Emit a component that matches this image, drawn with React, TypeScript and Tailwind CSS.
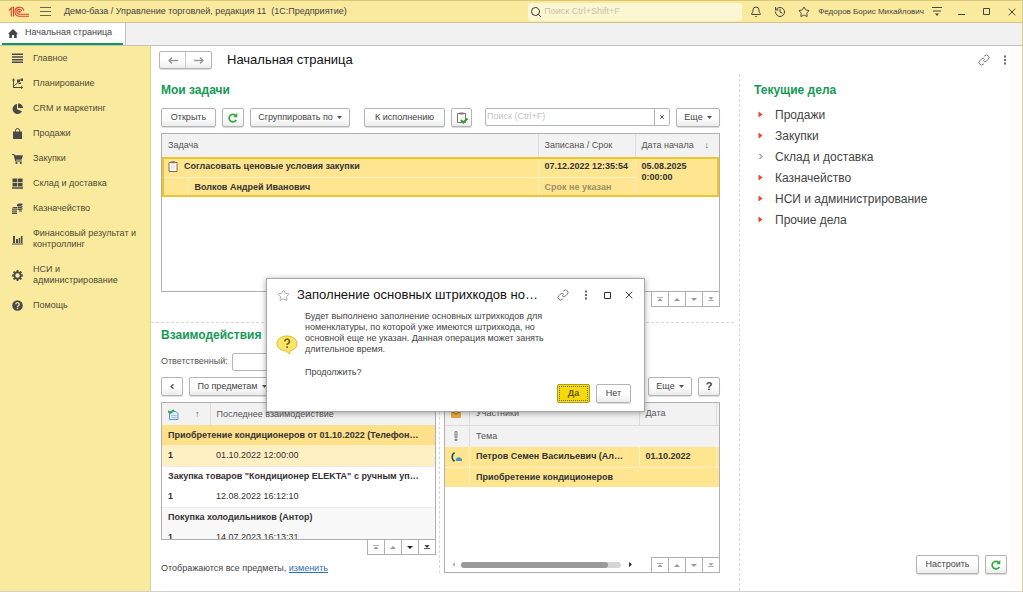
import React from "react";
import { Bell, History, Search, Star, X } from "lucide-react";

const btn =
  "flex h-[19px] shrink-0 items-center justify-center whitespace-nowrap rounded-[2px] border border-[#b4b4b4] bg-linear-to-b from-white from-50% to-[#ececec] text-[9px] leading-none text-[#444] shadow-[0_1px_1px_rgba(0,0,0,0.15)]";
const heading = "text-[12px] leading-4 font-bold text-[#149a55]";

function Refresh() {
  return (
    <svg viewBox="0 0 12 12" className="size-3" fill="none" stroke="#35a843" strokeWidth="1.7">
      <path d="M9.300 7.800A3.800 3.800 0 1 1 8.600 3.400" />
      <path d="M10.300 1v4.200H6.200z" fill="#35a843" stroke="none" />
    </svg>
  );
}

function Caret() {
  return (
    <svg viewBox="0 0 5 3" className="ml-1 h-[3px] w-[5px]" fill="#555">
      <path d="M0 0h5L2.500 3z" />
    </svg>
  );
}

function Dots() {
  return (
    <svg viewBox="0 0 4 12" className="h-3 w-1" fill="#666">
      <rect x="1" y="1.500" width="2" height="2" />
      <rect x="1" y="5" width="2" height="2" />
      <rect x="1" y="8.500" width="2" height="2" />
    </svg>
  );
}

function ChainLink() {
  return (
    <svg viewBox="0 0 24 24" className="size-3" fill="none" stroke="#777" strokeWidth="2">
      <path d="M10 13a5 5 0 0 0 7.540.54l3-3a5 5 0 0 0-7.070-7.070l-1.720 1.710" />
      <path d="M14 11a5 5 0 0 0-7.540-.54l-3 3a5 5 0 0 0 7.070 7.070l1.710-1.710" />
    </svg>
  );
}

function Logo() {
  return (
    <svg viewBox="0 0 22 12" className="h-3 w-[22px]" fill="none" stroke="#dc4030" strokeWidth="1.100">
      <path d="M.8 4.300 3.300 2v8.500M5.500 10.500V1.300H4.200" />
      <path d="M15.800 4.600A4.500 4.500 0 1 0 11.500 10.300h9.500" />
      <path d="M13.700 5A2.500 2.500 0 1 0 11.500 8.300h9.500" />
      <circle cx="11.500" cy="5.800" r=".7" />
    </svg>
  );
}

const navIcons: Record<string, React.ReactNode> = {
  main: <path d="M0 .5h11v1.500H0zM0 3.200h11v1.500H0zM0 5.900h11v1.500H0zM0 8.600h11v1.500H0z" />,
  plan: (
    <>
      <path d="M1.500 0 0 2.500h1V10h8v1l2.500-1.500L9 8v1H2V2.500h1z" />
      <path d="M2.500 7.500 7 3.500" stroke="currentColor" strokeWidth="1" />
      <path d="M5 1.500h3V4H5zM8.500.5H11V3H8.500zM6.500 4.500H9V6H6.500z" />
    </>
  ),
  crm: (
    <>
      <path d="M5 1v5.300l5 2A5 5 0 1 1 5 1z" />
      <path d="M6 .5A5 5 0 0 1 11 5H6z" />
    </>
  ),
  bag: (
    <>
      <path d="M1 3.500h9V11H1z" />
      <path d="M3.500 5V2.500a2 2 0 0 1 4 0V5" fill="none" stroke="currentColor" />
    </>
  ),
  cart: (
    <>
      <path d="M0 1h2.200l.6 1.200H11L9.500 6.700H4l.2.800h5.600v1H3.300L1.600 2H0z" />
      <circle cx="4.500" cy="9.900" r="1.100" />
      <circle cx="8.700" cy="9.900" r="1.100" />
    </>
  ),
  store: <path d="M.5.500h4.700v3.700H.5zM5.900.500h4.700v3.700H5.900zM.5 4.900h4.700v3.700H.5zM5.900 4.900h4.700v3.700H5.900zM0 9.300h11v1.500H0z" />,
  coins: (
    <>
      <path d="M5 1.500 7 .5h3.500V2L9 3H5zM5.500 3.500h4L10.500 3v1.200l-1 .8h-4zM5.500 5.500h4l1-.5v1.200l-1 .8h-4z" />
      <path d="M0 5 1.500 4H5v1.500H0zM0 6.200h5v1.300H0zM0 8.200h5v1.200H0zM0 10h5v1H0zM7 7.500h3v1H7z" />
    </>
  ),
  bars: <path d="M1 2h2v7H1zM4 5h2v4H4zM6.700 4h1.500v5H6.700zM8.900 2h1.600v7H8.900zM0 9.500h11v1H0z" />,
  gear: (
    <>
      <circle cx="5.500" cy="5.500" r="3.200" fill="none" stroke="currentColor" strokeWidth="1.900" />
      <path
        d="M5.500 0v2M5.500 9v2M0 5.500h2M9 5.500h2M1.600 1.600 3 3M8 8l1.400 1.400M1.600 9.400 3 8M8 3l1.400-1.400"
        stroke="currentColor"
        strokeWidth="1.800"
      />
    </>
  ),
  help: (
    <>
      <circle cx="5.500" cy="5.500" r="5.300" />
      <path d="M3.800 4.300a1.700 1.700 0 1 1 2.500 1.500c-.6.300-.8.600-.8 1.200M5.500 7.800V9" fill="none" stroke="#faea9e" strokeWidth="1.300" />
    </>
  ),
};

const nav: [string, string][] = [
  ["main", "Главное"],
  ["plan", "Планирование"],
  ["crm", "CRM и маркетинг"],
  ["bag", "Продажи"],
  ["cart", "Закупки"],
  ["store", "Склад и доставка"],
  ["coins", "Казначейство"],
  ["bars", "Финансовый результат и\nконтроллинг"],
  ["gear", "НСИ и\nадминистрирование"],
  ["help", "Помощь"],
];

function ScrollButtons({ off = [true, true, true, true] }: { off?: boolean[] }) {
  const shapes = ["M0 0h8v1H0zM4 1.500 7.500 5h-7z", "M4 1 8 5H0z", "M0 1h8L4 5z", "M.5 0h7L4 3.500zM0 4h8v1H0z"];
  const labels = ["В начало", "Вверх", "Вниз", "В конец"];
  return (
    <div className="flex border-l border-[#b0b0b0]">
      {shapes.map((d, i) => (
        <button
          key={i}
          aria-label={labels[i]}
          className="flex h-[15px] w-[17px] items-center justify-center border-r border-b border-[#b0b0b0] bg-white"
        >
          <svg viewBox="0 0 8 5" className="h-1 w-1.5" fill={off[i] ? "#999" : "#222"}>
            <path d={d} />
          </svg>
        </button>
      ))}
    </div>
  );
}

function TitleBar() {
  return (
    <header className="flex h-[23px] shrink-0 items-center border-t border-b border-t-[#d8c878] border-b-[#cfc48c] bg-[#faea9e] text-[#444]">
      <div className="ml-2">
        <Logo />
      </div>
      <button aria-label="Меню" className="ml-2.5">
        <svg viewBox="0 0 11 10" className="h-2.5 w-[11px]" fill="#6b654a">
          <path d="M0 0h11v1H0zM0 4h11v1H0zM0 8h11v1H0z" />
        </svg>
      </button>
      <div className="ml-[13px] text-[9px] whitespace-pre">Демо-база / Управление торговлей, редакция 11  (1С:Предприятие)</div>
      <label className="ml-auto flex h-[18px] w-[214px] items-center rounded-[2px] bg-[#fdf6d2] pl-0.5">
        <Search className="size-3 text-[#333]" strokeWidth={2} />
        <input
          aria-label="Поиск"
          placeholder="Поиск Ctrl+Shift+F"
          className="ml-0.5 min-w-0 flex-1 bg-transparent text-[9px] outline-none placeholder:text-[#c8c3a8]"
        />
      </label>
      <button aria-label="Уведомления" className="ml-2">
        <Bell className="size-3" strokeWidth={2} />
      </button>
      <button aria-label="История" className="ml-3">
        <History className="size-3" strokeWidth={2} />
      </button>
      <button aria-label="Избранное" className="ml-3">
        <Star className="size-3" strokeWidth={2} />
      </button>
      <div className="ml-2 text-[8px] whitespace-nowrap">Федоров Борис Михайлович</div>
      <button aria-label="Настройки" className="ml-2">
        <svg viewBox="0 0 10 9" className="h-[9px] w-2.5" fill="#444">
          <path d="M0 0h10v1H0zM1 3.500h8v1H1zM3 6.500h4L5 9z" />
        </svg>
      </button>
      <button aria-label="Свернуть" className="ml-4">
        <svg viewBox="0 0 7 7" className="size-[7px]" fill="#444">
          <path d="M0 6h7v1H0z" />
        </svg>
      </button>
      <button aria-label="Развернуть" className="ml-[18px]">
        <svg viewBox="0 0 7 7" className="size-[7px]" fill="none" stroke="#444">
          <path d="M.5.500h6v6h-6z" />
        </svg>
      </button>
      <button aria-label="Закрыть" className="mr-1 ml-4">
        <X className="size-3" strokeWidth={2} />
      </button>
    </header>
  );
}

function Tasks() {
  return (
    <section className="flex min-h-0 flex-[12] flex-col pr-[19px] pl-[10px]">
      <h2 className={`${heading} mt-2`}>Мои задачи</h2>
      <div className="mt-2.5 flex">
        <button className={`${btn} w-[55px]`}>Открыть</button>
        <button aria-label="Обновить" className={`${btn} ml-1.5 w-[22px]`}>
          <Refresh />
        </button>
        <button className={`${btn} ml-1.5 w-[100px]`}>
          Сгруппировать по
          <Caret />
        </button>
        <button className={`${btn} ml-3.5 w-[81px]`}>К исполнению</button>
        <button aria-label="Выполнено" className={`${btn} ml-1.5 w-[21px]`}>
          <svg viewBox="0 0 12 12" className="size-3">
            <path d="M1.500 1.500h8v9h-8z" fill="#fff" stroke="#8a6f66" />
            <path d="M3.500.5h4v2h-4z" fill="#777" />
            <path d="M5 8l2.200 2.500L11.500 6.500" fill="none" stroke="#2fa03c" strokeWidth="2" />
          </svg>
        </button>
        <div className="ml-[13px] flex h-[18px] min-w-0 flex-1 rounded-[2px] border border-[#b4b4b4]">
          <input
            aria-label="Поиск задач"
            placeholder="Поиск (Ctrl+F)"
            className="min-w-0 flex-1 px-px text-[9px] outline-none placeholder:text-[#c4c4c4]"
          />
          <button aria-label="Очистить" className="flex w-[15px] items-center justify-center border-l border-[#b4b4b4]">
            <X className="size-1.5 text-[#555]" strokeWidth={4} />
          </button>
        </div>
        <button className={`${btn} ml-1.5 w-11`}>
          Еще
          <Caret />
        </button>
      </div>
      <div className="mt-1.5 min-h-0 flex-1 overflow-hidden border border-[#b0b0b0]">
        <table className="w-full table-fixed border-collapse text-left text-[9px] leading-[11px]">
          <colgroup>
            <col className="w-[26px]" />
            <col />
            <col className="w-[97px]" />
            <col className="w-[84px]" />
          </colgroup>
          <thead className="bg-[#f2f2f2] text-[#555]">
            <tr className="h-[23px]">
              <th colSpan={2} className="px-1.5 font-normal">
                Задача
              </th>
              <th className="border-l border-[#dcdcdc] px-1.5 font-normal whitespace-nowrap">Записана / Срок</th>
              <th className="border-l border-[#dcdcdc] px-1.5 font-normal whitespace-nowrap">
                <div className="flex justify-between pr-1">
                  Дата начала <span>↓</span>
                </div>
              </th>
            </tr>
          </thead>
          <tbody className="bg-[#ffe58f] text-[#333] outline-2 -outline-offset-2 outline-[#ecc52e]">
            <tr className="h-5">
              <td colSpan={2} className="border-b border-[#fff3c6] px-1.5 font-bold">
                <div className="flex items-center gap-1.5">
                  <svg viewBox="0 0 10 11" className="h-[11px] w-2.5">
                    <path d="M1 1.500h8v9H1z" fill="#fff" stroke="#8d6a4c" />
                    <path d="M3 .3h4v2H3z" fill="#777" />
                    <path d="M3 5h4M3 7h4" stroke="#bbb" strokeWidth=".7" />
                  </svg>
                  Согласовать ценовые условия закупки
                </div>
              </td>
              <td className="border-b border-l border-[#fff3c6] px-1.5 font-bold whitespace-nowrap">07.12.2022 12:35:54</td>
              <td rowSpan={2} className="border-l border-[#fff3c6] px-1.5 pt-1 align-top font-bold">
                05.08.2025
                <br />
                0:00:00
              </td>
            </tr>
            <tr className="h-5">
              <td className="border-r border-[#fff3c6]" />
              <td className="px-1.5 font-bold">Волков Андрей Иванович</td>
              <td className="border-l border-[#fff3c6] px-1.5 font-bold text-[#9a8f68]">Срок не указан</td>
            </tr>
          </tbody>
        </table>
      </div>
      <div className="mb-[15px] flex justify-end">
        <ScrollButtons />
      </div>
    </section>
  );
}

const subjects = [
  { title: "Приобретение кондиционеров от 01.10.2022 (Телефон…", date: "01.10.2022 12:00:00", a: "bg-[#ffe08a]", b: "bg-[#fff0c4]" },
  { title: 'Закупка товаров "Кондиционер ELEKTA" с ручным уп…', date: "12.08.2022 16:12:10", a: "bg-white", b: "bg-white" },
  { title: "Покупка холодильников (Антор)", date: "14.07.2023 16:13:31", a: "bg-[#f8f8f8]", b: "bg-[#f8f8f8]" },
];

function Interactions() {
  return (
    <section className="flex min-h-0 flex-[13] flex-col pr-[19px] pl-[10px]">
      <div className="-mr-[14px] -ml-[10px] border-t border-dashed border-[#d8d8d8]" />
      <h2 className={`${heading} mt-1`}>Взаимодействия</h2>
      <label className="mt-2.5 flex h-[18px] items-center gap-1 text-[9px] text-[#555]">
        Ответственный:
        <input className="h-[18px] w-48 rounded-[2px] border border-[#b4b4b4]" />
      </label>
      <div className="mt-1.5 flex">
        <button aria-label="Назад" className={`${btn} w-[22px]`}>
          <svg viewBox="0 0 4 5" className="h-[5px] w-1" fill="none" stroke="#444" strokeWidth="1.200">
            <path d="M3.500.3 1 2.500l2.500 2.200" />
          </svg>
        </button>
        <button className={`${btn} ml-1.5 w-[86px]`}>
          По предметам
          <Caret />
        </button>
        <button className={`${btn} ml-auto w-11`}>
          Еще
          <Caret />
        </button>
        <button aria-label="Справка" className={`${btn} ml-1.5 w-[22px]`}>
          <b className="text-[11px]">?</b>
        </button>
      </div>
      <div className="mt-1.5 flex min-h-0 flex-1">
        <div className="flex min-w-0 flex-1 flex-col">
          <div className="min-h-0 flex-1 overflow-hidden border border-[#b0b0b0]">
            <table className="w-full table-fixed border-collapse text-left text-[9px] leading-[11px]">
              <colgroup>
                <col className="w-12" />
                <col />
              </colgroup>
              <thead className="bg-[#f2f2f2] text-[#555]">
                <tr className="h-[22px]">
                  <th className="border-r border-[#dcdcdc] px-1.5 font-normal">
                    <div className="flex items-center gap-4">
                      <svg viewBox="0 0 11 11" className="size-[11px]">
                        <path d="M1.500 2.500H8l2 2v6H1.500z" fill="#dcebf7" stroke="#5d9bc9" />
                        <path d="M3.500 6.500h5M3.500 8.500h5" stroke="#8dbbe0" strokeWidth=".8" />
                        <path d="M0 2 2.200 4 6 1" fill="none" stroke="#3aa648" strokeWidth="2" />
                      </svg>
                      <span>↑</span>
                    </div>
                  </th>
                  <th className="px-1.5 font-normal">Последнее взаимодействие</th>
                </tr>
              </thead>
              {subjects.map((s) => (
                <tbody key={s.date} className="border-b border-[#ececec] text-[#333]">
                  <tr className={`h-5 ${s.a}`}>
                    <td colSpan={2} className="px-1.5 font-bold whitespace-nowrap">
                      {s.title}
                    </td>
                  </tr>
                  <tr className={`h-[21px] ${s.b}`}>
                    <td className="px-1.5 font-bold">1</td>
                    <td className="px-1.5">{s.date}</td>
                  </tr>
                </tbody>
              ))}
            </table>
          </div>
          <div className="flex justify-end">
            <ScrollButtons off={[true, true, false, false]} />
          </div>
          <p className="mt-[7px] mb-[17px] text-[9px] leading-3 text-[#444]">
            Отображаются все предметы,{" "}
            <a href="#change" className="text-[#2f6fb5] underline">
              изменить
            </a>
          </p>
        </div>
        <div className="mr-1 mb-[18px] ml-[3px] border-l border-dashed border-[#d8d8d8]" />
        <div className="mb-[18px] flex min-w-0 flex-1 flex-col border border-[#b0b0b0]">
          <table className="w-full table-fixed border-collapse text-left text-[9px] leading-[11px]">
            <colgroup>
              <col className="w-[25px]" />
              <col />
              <col className="w-[77px]" />
              <col className="w-[3px]" />
            </colgroup>
            <thead className="bg-[#f2f2f2] text-[#555]">
              <tr className="h-[22px] border-b border-[#dcdcdc]">
                <th className="border-r border-[#dcdcdc] px-1.5">
                  <svg viewBox="0 0 10 8" className="h-2 w-2.5">
                    <path d="M0 0h10v8H0z" fill="#e9ab45" />
                    <path d="M0 1l5 3 5-3" fill="none" stroke="#b97c1f" />
                  </svg>
                </th>
                <th className="px-1.5 font-normal">Участники</th>
                <th className="border-x border-[#dcdcdc] px-1.5 font-normal">Дата</th>
                <th />
              </tr>
              <tr className="h-[22px]">
                <th className="border-r border-[#dcdcdc] px-1.5">
                  <svg viewBox="0 0 10 10" className="size-2.5" fill="#ccc" stroke="#777" strokeWidth=".8">
                    <path d="M4 .5h2v6H4zM4 8h2v1.500H4z" />
                  </svg>
                </th>
                <th colSpan={3} className="px-1.5 font-normal">
                  Тема
                </th>
              </tr>
            </thead>
            <tbody className="bg-[#ffe58f] font-bold text-[#333]">
              <tr className="h-5 border-b border-[#fff3c6]">
                <td className="border-r border-[#fff3c6] px-1.5">
                  <svg viewBox="0 0 11 10" className="h-2.5 w-[11px]">
                    <path d="M3.800 1.300H2.600C.9 3.500.9 6.500 2.600 8.700h1.200" fill="none" stroke="#234f5e" strokeWidth="1.600" />
                    <path d="M4.800 9V7l1.500-1.500h3L11 7v2z" fill="#3f9ac9" />
                  </svg>
                </td>
                <td className="px-1.5 whitespace-nowrap">Петров Семен Васильевич (Ал…</td>
                <td className="border-x border-[#fff3c6] px-1.5">01.10.2022</td>
                <td />
              </tr>
              <tr className="h-5">
                <td className="border-r border-[#fff3c6]" />
                <td colSpan={3} className="px-1.5">
                  Приобретение кондиционеров
                </td>
              </tr>
            </tbody>
          </table>
          <div className="mt-auto flex items-center">
            <svg viewBox="0 0 3 5" className="ml-[7px] h-[5px] w-[3px]" fill="#bbb">
              <path d="M3 0v5L0 2.500z" />
            </svg>
            <div className="ml-1.5 h-1.5 flex-1 rounded-full bg-[#d6d6d6]">
              <div className="h-1.5 w-11/12 rounded-full bg-[#999]" />
            </div>
            <svg viewBox="0 0 3 5" className="mr-[19px] ml-2 h-[5px] w-[3px]" fill="#333">
              <path d="M0 0v5l3-2.500z" />
            </svg>
            <div className="-mr-px -mb-px border-t border-[#b0b0b0]">
              <ScrollButtons />
            </div>
          </div>
        </div>
      </div>
    </section>
  );
}

const todo = ["Продажи", "Закупки", "Склад и доставка", "Казначейство", "НСИ и администрирование", "Прочие дела"];

function CurrentWork() {
  return (
    <aside className="flex w-[283px] shrink-0 flex-col border-l border-dashed border-[#d8d8d8] pr-[15px] pl-[14px]">
      <h2 className={`${heading} mt-2`}>Текущие дела</h2>
      <ul className="mt-1.5 text-[12px] text-[#444]">
        {todo.map((t, i) => (
          <li key={t} className="flex h-[21px] items-center">
            {i === 2 ? (
              <svg viewBox="0 0 5 7" className="ml-1 h-[7px] w-[5px]" fill="none" stroke="#555">
                <path d="M1.500 1 4 3.500 1.500 6" />
              </svg>
            ) : (
              <svg viewBox="0 0 5 7" className="ml-1 h-[7px] w-[5px]" fill="#ee4130">
                <path d="M.5.500v6l4-3z" />
              </svg>
            )}
            <a href="#work" className="ml-3">
              {t}
            </a>
          </li>
        ))}
      </ul>
      <div className="mt-auto mb-[17px] flex justify-end gap-1.5">
        <button className={`${btn} w-[63px]`}>Настроить</button>
        <button aria-label="Обновить" className={`${btn} w-[22px]`}>
          <Refresh />
        </button>
      </div>
    </aside>
  );
}

function Dialog() {
  return (
    <div
      role="dialog"
      aria-labelledby="dlg-title"
      className="absolute top-[278px] left-[266px] w-[379px] border border-[#a8a8a8] bg-white shadow-[0_1px_6px_rgba(0,0,0,0.35)]"
    >
      <div className="mt-2 flex h-4 items-center pr-[9px] pl-[10px]">
        <Star className="size-[13px] text-[#aaa]" strokeWidth={1.8} />
        <h2 id="dlg-title" className="ml-[7px] text-[13px] leading-4 whitespace-nowrap text-[#111]">
          Заполнение основных штрихкодов но…
        </h2>
        <button aria-label="Ссылка" className="ml-auto">
          <ChainLink />
        </button>
        <button aria-label="Еще" className="ml-[15px]">
          <Dots />
        </button>
        <button aria-label="Развернуть" className="ml-4">
          <svg viewBox="0 0 7 7" className="size-[7px]" fill="none" stroke="#333">
            <path d="M.5.500h6v6h-6z" />
          </svg>
        </button>
        <button aria-label="Закрыть" className="ml-3">
          <X className="size-3 text-[#444]" strokeWidth={2} />
        </button>
      </div>
      <div className="mt-2 flex pl-[9px]">
        <svg viewBox="0 0 22 20" className="mt-6 h-5 w-[22px]">
          <path
            d="M11 1c5.500 0 10 3.300 10 7.500 0 3.800-2.700 6.200-6.500 7l-1.200 3.500-3-3C4.800 15.800 1 12.700 1 8.500 1 4.300 5.500 1 11 1z"
            fill="#fbe667"
            stroke="#d8b92c"
          />
          <path d="M8.800 6.500a2.300 2.300 0 1 1 3.400 2c-.8.400-1.100.8-1.100 1.600M11.100 11.300V13" fill="none" stroke="#7c6412" strokeWidth="1.700" />
        </svg>
        <div className="ml-[7px] w-[256px] text-[9px] leading-[11px] text-[#444]">
          <p>
            Будет выполнено заполнение основных штрихкодов для номенклатуры, по которой уже имеются штрихкода, но основной еще не указан. Данная
            операция может занять длительное время.
          </p>
          <p className="mt-3">Продолжить?</p>
        </div>
      </div>
      <div className="mt-1.5 mr-[13px] mb-2 flex justify-end gap-1.5">
        <button className="h-[19px] w-[33px] rounded-[2px] border border-[#b39d14] bg-[#f5db0c] p-px text-[9px] leading-none font-bold text-[#66580c]">
          <span className="flex h-full items-center justify-center border border-dotted border-[#77660c]">Да</span>
        </button>
        <button className={`${btn} w-[35px]`}>Нет</button>
      </div>
    </div>
  );
}

export default function App() {
  return (
    <div className="relative flex h-screen flex-col overflow-hidden border-r border-b border-r-[#d9cf98] border-b-[#d0d0d0] bg-white font-['Liberation_Sans',Arial,sans-serif]">
      <TitleBar />
      <div className="flex h-[23px] shrink-0 border-b border-[#c2c2c2] bg-[#f1f1f1]">
        <a href="#home" className="flex w-[126px] items-center border-r border-[#c2c2c2] bg-white px-0.5 text-[9px] text-[#444]">
          <span className="flex h-full w-full items-center border-b-2 border-[#149a55] pl-1.5 whitespace-nowrap">
            <svg viewBox="0 0 10 9" className="mr-[7px] h-[9px] w-2.5" fill="#444">
              <path d="M5 0 10 4.800H8.700V9H6.100V6H3.900v3H1.300V4.800H0z" />
            </svg>
            Начальная страница
          </span>
        </a>
      </div>
      <div className="flex min-h-0 flex-1">
        <nav className="w-[151px] shrink-0 border-r border-[#e0d48f] bg-[#faea9e]">
          {nav.map(([icon, label]) => (
            <a key={icon} href={`#${icon}`} className="flex items-center py-[7px] pr-1 pl-3 text-[9px] leading-[11px] text-[#4f4a35]">
              <svg viewBox="0 0 11 11" className="size-[11px] shrink-0 text-[#4a4a4a]" fill="currentColor">
                {navIcons[icon]}
              </svg>
              <span className="ml-2.5 whitespace-pre-line">{label}</span>
            </a>
          ))}
        </nav>
        <main className="flex min-w-0 flex-1 flex-col">
          <div className="flex h-[28px] shrink-0 items-center pr-[15px] pl-2">
            <div className="flex h-[18px] w-[53px] rounded-[2px] border border-[#b4b4b4] bg-linear-to-b from-white from-50% to-[#ececec] shadow-[0_1px_1px_rgba(0,0,0,0.15)]">
              <button aria-label="Назад" className="flex flex-1 items-center justify-center border-r border-[#ccc]">
                <svg viewBox="0 0 10 7" className="h-[7px] w-2.5" fill="none" stroke="#999" strokeWidth="1.500">
                  <path d="M10 3.500H1M4 .5l-3 3 3 3" />
                </svg>
              </button>
              <button aria-label="Вперед" className="flex flex-1 items-center justify-center">
                <svg viewBox="0 0 10 7" className="h-[7px] w-2.5" fill="none" stroke="#999" strokeWidth="1.500">
                  <path d="M0 3.500h9M6 .5l3 3-3 3" />
                </svg>
              </button>
            </div>
            <h1 className="ml-[15px] text-[13px] leading-4 text-[#111]">Начальная страница</h1>
            <button aria-label="Ссылка" className="ml-auto">
              <ChainLink />
            </button>
            <button aria-label="Еще" className="ml-[13px]">
              <Dots />
            </button>
          </div>
          <div className="flex min-h-0 flex-1">
            <div className="flex min-w-0 flex-1 flex-col">
              <Tasks />
              <Interactions />
            </div>
            <CurrentWork />
          </div>
        </main>
      </div>
      <Dialog />
    </div>
  );
}
